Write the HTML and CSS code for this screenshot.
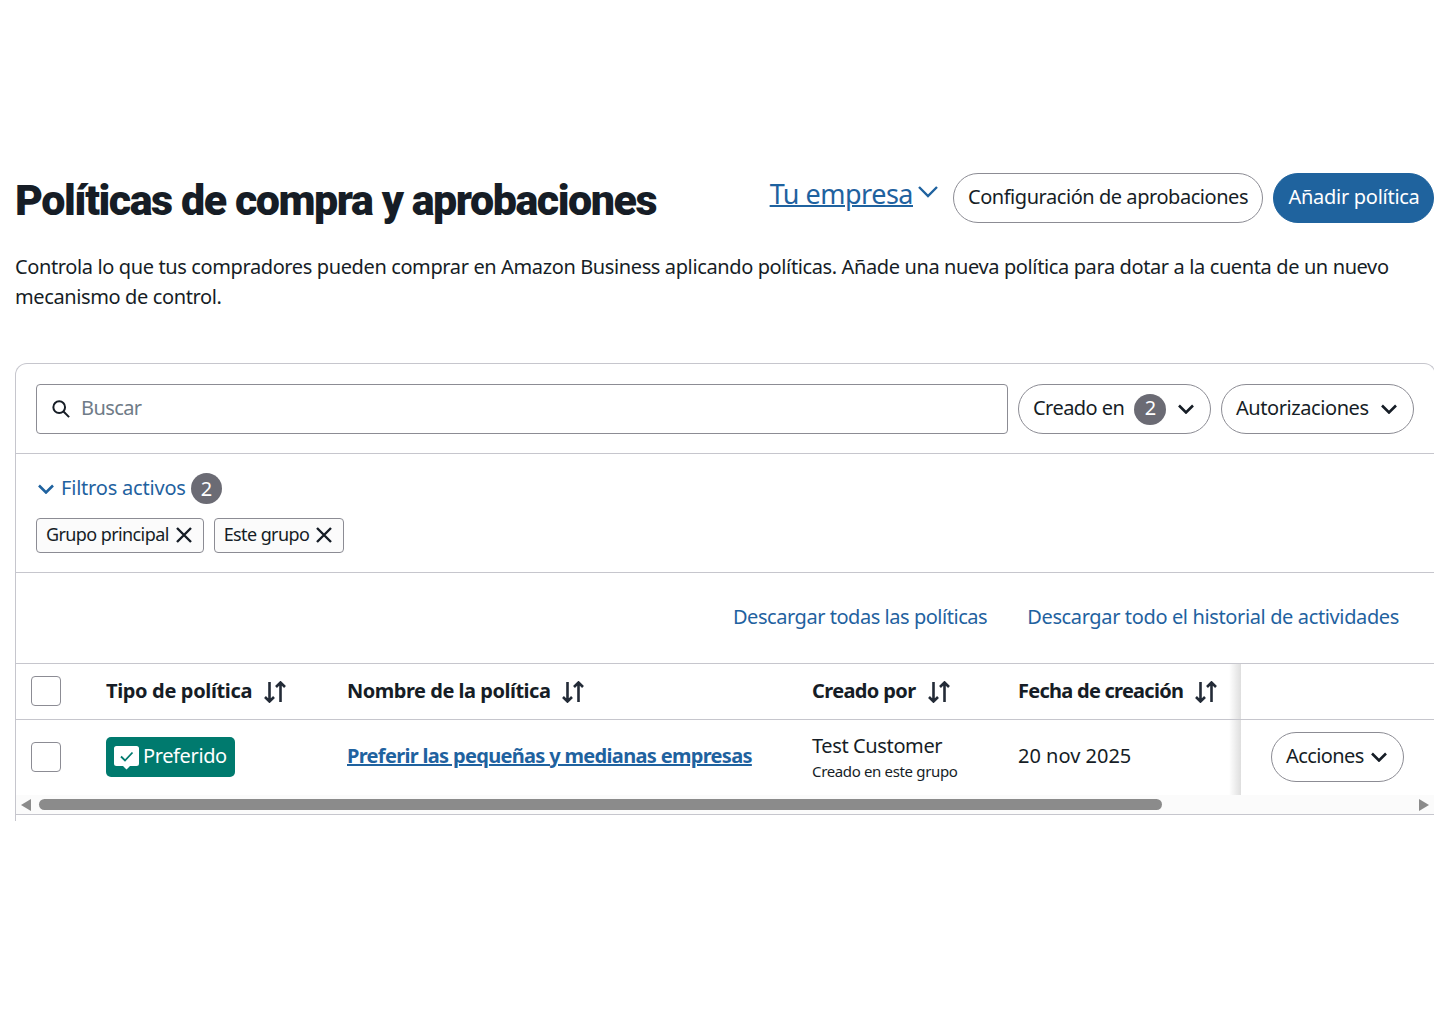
FILE: index.html
```html
<!DOCTYPE html>
<html lang="es">
<head>
<meta charset="utf-8">
<title>Políticas de compra y aprobaciones</title>
<link rel="stylesheet" href="styles.css">
</head>
<body>
<main class="page">
  <header class="head">
    <h1 class="title">Políticas de compra y aprobaciones</h1>
    <div class="head-actions">
      <a class="scope" href="#">Tu empresa</a>
      <svg class="scope-chev" viewBox="0 0 22 14"><path d="M2 2l9 9 9-9"/></svg>
      <button class="btn btn-config">Configuración de aprobaciones</button>
      <button class="btn btn-primary">Añadir política</button>
    </div>
  </header>
  <p class="intro">Controla lo que tus compradores pueden comprar en Amazon Business aplicando políticas. Añade una nueva política para dotar a la cuenta de un nuevo mecanismo de control.</p>

  <section class="card">
    <div class="search-row">
      <label class="search">
        <svg class="search-icon" viewBox="0 0 20 20"><circle cx="8" cy="8" r="6.500"/><path d="M12.500 12.500l6.500 6.500"/></svg>
        <span class="placeholder">Buscar</span>
      </label>
      <button class="btn btn-filter btn-created"><span class="btn-label">Creado en</span><span class="count count-in">2</span><svg class="chev" viewBox="0 0 16 10"><path d="M1 1.500l7 7 7-7"/></svg></button>
      <button class="btn btn-filter btn-auth"><span class="btn-label">Autorizaciones</span><svg class="chev" viewBox="0 0 16 10"><path d="M1 1.500l7 7 7-7"/></svg></button>
    </div>

    <div class="filters">
      <div class="filters-head">
        <svg class="chev chev-blue" viewBox="0 0 16 10"><path d="M1 1.500l7 7 7-7"/></svg>
        <span class="filters-label">Filtros activos</span>
        <span class="count">2</span>
      </div>
      <div class="tags">
        <span class="tag">Grupo principal<svg class="tag-x" viewBox="0 0 16 16"><path d="M1 1l14 14M15 1L1 15"/></svg></span>
        <span class="tag">Este grupo<svg class="tag-x" viewBox="0 0 16 16"><path d="M1 1l14 14M15 1L1 15"/></svg></span>
      </div>
    </div>

    <div class="downloads">
      <a class="dl-all" href="#">Descargar todas las políticas</a>
      <a class="dl-log" href="#">Descargar todo el historial de actividades</a>
    </div>

    <table class="table">
      <colgroup>
        <col class="c-check"><col class="c-type"><col class="c-name"><col class="c-by"><col class="c-date"><col class="c-act">
      </colgroup>
      <thead>
        <tr>
          <th class="cell-check"><span class="check"></span></th>
          <th><span class="th-in th-type">Tipo de política<svg class="sort" viewBox="0 0 22 22"><path d="M5.500 1v19.500M1 16l4.500 4.500L10 16M16.500 21V1.500M12 6l4.500-4.500L21 6"/></svg></span></th>
          <th><span class="th-in">Nombre de la política<svg class="sort" viewBox="0 0 22 22"><path d="M5.500 1v19.500M1 16l4.500 4.500L10 16M16.500 21V1.500M12 6l4.500-4.500L21 6"/></svg></span></th>
          <th><span class="th-in th-by">Creado por<svg class="sort" viewBox="0 0 22 22"><path d="M5.500 1v19.500M1 16l4.500 4.500L10 16M16.500 21V1.500M12 6l4.500-4.500L21 6"/></svg></span></th>
          <th><span class="th-in th-date">Fecha de creación<svg class="sort" viewBox="0 0 22 22"><path d="M5.500 1v19.500M1 16l4.500 4.500L10 16M16.500 21V1.500M12 6l4.500-4.500L21 6"/></svg></span></th>
          <th class="sticky"></th>
        </tr>
      </thead>
      <tbody>
        <tr>
          <td class="cell-check"><span class="check"></span></td>
          <td><span class="badge"><svg class="badge-icon" viewBox="0 0 25 24"><path class="bubble" d="M2.500 0h20A2.500 2.500 0 0 1 25 2.500v15a2.500 2.500 0 0 1-2.500 2.500H16l-3.500 3.500L9 20H2.500A2.500 2.500 0 0 1 0 17.500v-15A2.500 2.500 0 0 1 2.500 0z"/><path class="tick" d="M7 10.500l4 4 7.500-8"/></svg><span class="badge-text">Preferido</span></span></td>
          <td><a class="policy-link" href="#">Preferir las pequeñas y medianas empresas</a></td>
          <td><div>Test Customer</div><div class="sub">Creado en este grupo</div></td>
          <td class="date">20 nov 2025</td>
          <td class="sticky"><button class="btn btn-act"><span class="btn-label">Acciones</span><svg class="chev chev-act" viewBox="0 0 16 10"><path d="M1 1.500l7 7 7-7"/></svg></button></td>
        </tr>
      </tbody>
    </table>

    <div class="scrollbar">
      <span class="arrow arrow-l"></span>
      <div class="track"><div class="thumb"></div></div>
      <span class="arrow arrow-r"></span>
    </div>
  </section>
</main>
</body>
</html>
```

FILE: styles.css
```css
* { box-sizing: border-box; }
html, body { margin: 0; background: #fff; }
body {
  overflow-x: hidden;
  font-family: "Noto Sans", "Open Sans", sans-serif;
  font-size: 20px;
  line-height: 30px;
  letter-spacing: -0.38px;
  color: #161d26;
}
.page { padding: 173px 0 197px 15px; width: 1434px; overflow: hidden; }
a { color: #1f629f; text-decoration: none; }

.head { display: flex; justify-content: space-between; align-items: center; height: 50px; }
.title {
  margin: 4px 0 0;
  font-family: Roboto, Inter, sans-serif;
  font-size: 43px;
  font-weight: 900;
  letter-spacing: -1.46px;
  line-height: 50px;
}
.head-actions { display: flex; align-items: center; }
.scope { font-size: 27px; letter-spacing: -0.5px; line-height: 40px; text-decoration: underline; text-decoration-thickness: 2px; margin-top: -8px; }
.scope-chev { width: 22px; height: 14px; margin: -12px 14px 0 4px; fill: none; stroke: #1f629f; stroke-width: 2.400; }

.btn {
  font: inherit;
  letter-spacing: inherit;
  color: inherit;
  height: 50px;
  border-radius: 25px;
  background: #fff;
  border: 1px solid #8c8c94;
  padding: 0 15px 2px 14px;
  display: inline-flex;
  align-items: center;
  white-space: nowrap;
}
.btn-config { width: 310px; justify-content: center; letter-spacing: -0.45px; padding-left: 15px; }
.btn-primary { width: 161px; margin-left: 10px; background: #1f639e; border-color: #1f639e; color: #fff; justify-content: center; letter-spacing: -0.27px; padding-left: 16px; }

.intro { margin: 29px 0 51px; width: 1385px; }

.card {
  width: 1421px;
  height: 458px;
  border: 1px solid #c6c6cd;
  border-bottom: 0;
  border-radius: 12px 12px 0 0;
}
.search-row {
  display: flex;
  gap: 10px;
  padding: 20px 21px 19px 20px;
  border-bottom: 1px solid #c6c6cd;
}
.search {
  flex: 1;
  height: 50px;
  display: flex;
  align-items: center;
  gap: 11px;
  padding: 0 0 2px 15px;
  border: 1px solid #8c8c94;
  border-radius: 4px;
}
.search-icon { width: 18px; height: 18px; margin-top: 2px; fill: none; stroke: #161d26; stroke-width: 2.200; }
.placeholder { color: #6f7b87; letter-spacing: -0.6px; }
.btn-filter { width: 193px; flex: none; }
.btn-created .btn-label { letter-spacing: -0.55px; margin-right: 10px; }
.btn-created .chev { margin-left: 12px; }
.btn-auth .btn-label { letter-spacing: -0.43px; margin-right: 12px; }
.count {
  display: inline-flex;
  align-items: center;
  justify-content: center;
  width: 31px;
  height: 31px;
  border-radius: 50%;
  background: #6b6b74;
  color: #fff;
}
.count-in { width: 32px; height: 31px; margin-top: 2px; padding-bottom: 2px; }
.chev { width: 16px; height: 10px; flex: none; margin-top: 2px; fill: none; stroke: #161d26; stroke-width: 2.600; }
.chev-blue { stroke: #1f629f; margin-top: 0; }

.filters { height: 119px; padding: 19px 20px 0; border-bottom: 1px solid #c6c6cd; }
.filters-head { display: flex; align-items: center; height: 31px; padding-left: 2px; }
.filters-label { color: #1f629f; letter-spacing: -0.2px; margin: 0 5px 0 7px; padding-bottom: 1px; }
.tags { display: flex; gap: 10px; margin-top: 14px; }
.tag {
  display: inline-flex;
  align-items: center;
  gap: 7px;
  height: 35px;
  padding: 0 11px 3px 9px;
  font-size: 18px;
  letter-spacing: -0.6px;
  background: #fbfbfb;
  border: 1px solid #8c8c94;
  border-radius: 4px;
}
.tag-x { width: 16px; height: 16px; margin-top: 1px; fill: none; stroke: #161d26; stroke-width: 2.400; }

.downloads {
  display: flex;
  justify-content: flex-end;
  gap: 40px;
  height: 91px;
  padding: 29px 36px 0 0;
  border-bottom: 1px solid #c6c6cd;
}
.dl-all { letter-spacing: -0.46px; }
.dl-log { letter-spacing: -0.37px; }

.table { width: 1420px; table-layout: fixed; border-collapse: separate; border-spacing: 0; }
.c-check { width: 90px; }
.c-type { width: 241px; }
.c-name { width: 465px; }
.c-by { width: 206px; }
.c-date { width: 223px; }
.c-act { width: 195px; }
th, td { padding: 0 0 2px; text-align: left; vertical-align: middle; }
td { padding-bottom: 4px; }
th { height: 56px; font-weight: 700; border-bottom: 1px solid #c6c6cd; }
td { height: 75px; }
th.cell-check, td.cell-check { padding: 0 0 2px 15px; }
.check { display: block; width: 30px; height: 30px; border: 1px solid #8c8c94; border-radius: 4px; background: #fff; }
.th-in { display: inline-flex; align-items: center; gap: 12px; letter-spacing: -0.48px; }
.th-type { letter-spacing: -0.35px; }
.th-by { letter-spacing: -0.62px; }
.th-date { letter-spacing: -0.74px; }
.sort { width: 22px; height: 22px; margin-top: 2px; fill: none; stroke: #232b37; stroke-width: 2.600; }
.sticky { position: relative; }
th.sticky, td.sticky { padding: 0 0 2px 30px; }
.sticky::before {
  content: "";
  position: absolute;
  top: 0;
  bottom: 0;
  left: -12px;
  width: 12px;
  background: linear-gradient(to right, rgba(0,0,0,0), rgba(0,0,0,.13));
}
.badge {
  display: inline-flex;
  align-items: center;
  gap: 4px;
  width: 129px;
  height: 40px;
  margin-top: 4px;
  padding-left: 8px;
  color: #fff;
  background: #007a6e;
  border-radius: 5px;
}
.badge-icon { width: 25px; height: 24px; margin-top: 2px; }
.badge-text { padding-bottom: 2px; }
.bubble { fill: #fff; }
.tick { fill: none; stroke: #007a6e; stroke-width: 1.800; }
.policy-link { font-weight: 700; letter-spacing: -0.68px; text-decoration: underline; text-decoration-thickness: 2px; }
.sub { font-size: 15px; line-height: 20px; letter-spacing: -0.35px; }
.date { letter-spacing: 0; }
.btn-act { width: 133px; }
.btn-act .btn-label { letter-spacing: -0.6px; margin-right: 7px; }
.chev-act { width: 16px; }

.scrollbar {
  display: flex;
  align-items: center;
  height: 20px;
  background: #fbfbfb;
  border-bottom: 1px solid #c6c6cd;
  padding: 0 6px 0 5px;
}
.arrow { width: 0; height: 0; border-top: 6px solid transparent; border-bottom: 6px solid transparent; }
.arrow-l { border-right: 10px solid #8b8b8b; }
.arrow-r { border-left: 10px solid #8b8b8b; }
.track { flex: 1; padding-left: 8px; }
.thumb { width: 1123px; height: 11px; border-radius: 6px; background: #8b8b8b; }
```
